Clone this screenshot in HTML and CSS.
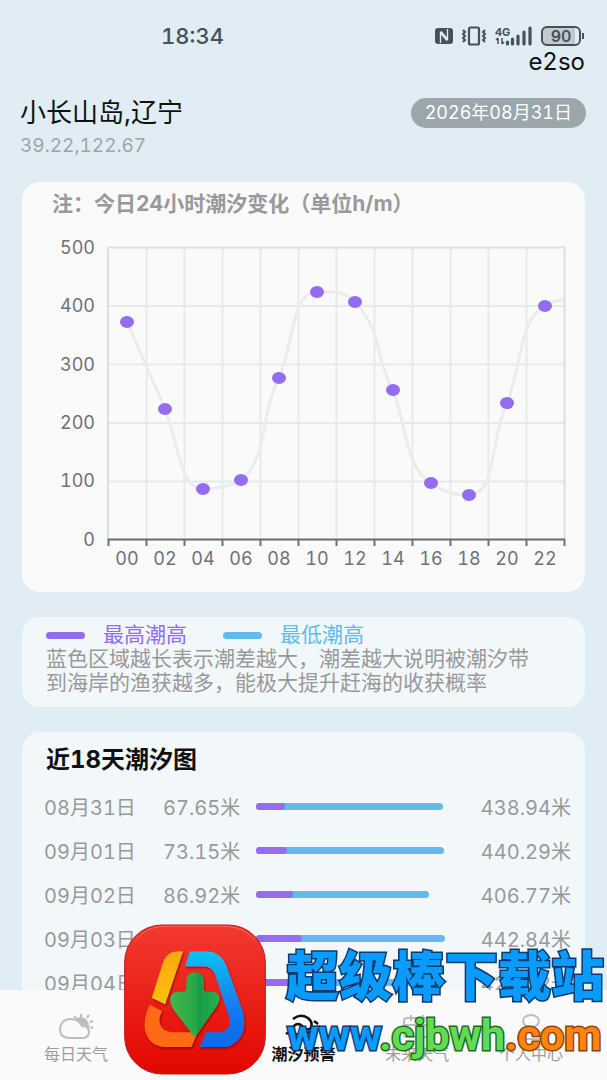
FILE: index.html
```html
<!DOCTYPE html>
<html lang="zh-CN">
<head>
<meta charset="utf-8">
<meta name="viewport" content="width=device-width, initial-scale=1">
<title>潮汐预警</title>
<link rel="stylesheet" href="styles.css">
</head>
<body>
<div class="screen">
  <div class="status">
    <time class="clock">18:34</time>
    <div class="indicators">
      <svg width="18" height="18" viewBox="0 0 18 18" aria-hidden="true"><rect x="0" y="1" width="18" height="16" rx="3" fill="#475159"/><path d="M5.500 16V6L12 13.500M12.500 2V12L6 4.500" fill="none" stroke="#e0edf4" stroke-width="1.300"/></svg>
      <svg width="26" height="20" viewBox="0 0 26 20" fill="none" stroke="#475159" aria-hidden="true"><rect x="8" y="1.500" width="10" height="17" rx="1.500" stroke-width="2.200"/><path d="M2 4l2 2-2 2 2 2-2 2 2 2-2 2M24 4l-2 2 2 2-2 2 2 2-2 2 2 2" stroke-width="2"/></svg>
      <svg width="38" height="20" viewBox="0 0 38 20" aria-hidden="true"><text class="signal-text" x="0" y="10">4G</text><path d="M3 12v6M1 14l2-2M7 12v6M7 18l2-2" stroke="#475159" stroke-width="1.500" fill="none"/><path d="M12.500 16v2M17.500 13v5M23 10v8M29 6v12M35 2v16" stroke="#475159" stroke-width="3.200" stroke-linecap="round"/></svg>
      <span class="battery">90</span>
    </div>
  </div>
  <div class="user">e2so</div>

  <header class="place">
    <div class="place-row">
      <h1 class="place-name">小长山岛,辽宁</h1>
      <button class="date-pill" type="button">2026年08月31日</button>
    </div>
    <p class="coords">39.22,122.67</p>
  </header>

  <main class="content">
    <section class="card chart-card">
      <h2 class="chart-title">注：今日24小时潮汐变化（单位h/m）</h2>
      <svg class="chart" viewBox="0 0 563 374" role="img" aria-label="今日24小时潮汐变化">
        <path class="grid" d="M86 88H542M86 146.500H542M86 205H542M86 263.500H542M124.500 30V321M162.500 30V321M200.500 30V321M238.500 30V321M276.500 30V321M314.500 30V321M352.500 30V321M390.500 30V321M428.500 30V321M466.500 30V321M504.500 30V321"/>
        <rect class="frame" x="86" y="29.500" width="456.500" height="292"/>
        <path class="curve" d="M105 104L143 191C158 230 158 271 181 271Q203 271 219 262C247 240 238 195 257 160C273 120 270 74 295 74C318 73 326 76 333 84C360 112 353 140 371 172C384 205 384 252 409 265Q427 278 447 277C475 276 467 225 485 185C501 145 496 103 523 88Q532 82 542 82"/>
        <path class="axis" d="M85.500 321.500H543M86.500 321V328M124.500 321V328M162.500 321V328M200.500 321V328M238.500 321V328M276.500 321V328M314.500 321V328M352.500 321V328M390.500 321V328M428.500 321V328M466.500 321V328M504.500 321V328M542.500 321V328"/>
        <g class="dots">
          <ellipse cx="105" cy="104" rx="7" ry="6"/><ellipse cx="143" cy="191" rx="7" ry="6"/><ellipse cx="181" cy="271" rx="7" ry="6"/><ellipse cx="219" cy="262" rx="7" ry="6"/><ellipse cx="257" cy="160" rx="7" ry="6"/><ellipse cx="295" cy="74" rx="7" ry="6"/><ellipse cx="333" cy="84" rx="7" ry="6"/><ellipse cx="371" cy="172" rx="7" ry="6"/><ellipse cx="409" cy="265" rx="7" ry="6"/><ellipse cx="447" cy="277" rx="7" ry="6"/><ellipse cx="485" cy="185" rx="7" ry="6"/><ellipse cx="523" cy="88" rx="7" ry="6"/>
        </g>
        <g class="y-labels">
          <text x="73" y="36">500</text><text x="73" y="94">400</text><text x="73" y="153">300</text><text x="73" y="211">200</text><text x="73" y="269">100</text><text x="73" y="328">0</text>
        </g>
        <g class="x-labels">
          <text x="105" y="347">00</text><text x="143" y="347">02</text><text x="181" y="347">04</text><text x="219" y="347">06</text><text x="257" y="347">08</text><text x="295" y="347">10</text><text x="333" y="347">12</text><text x="371" y="347">14</text><text x="409" y="347">16</text><text x="447" y="347">18</text><text x="485" y="347">20</text><text x="523" y="347">22</text>
        </g>
      </svg>
    </section>

    <section class="card note-card">
      <div class="legend">
        <span class="key key-high">最高潮高</span>
        <span class="key key-low">最低潮高</span>
      </div>
      <p class="note">蓝色区域越长表示潮差越大，潮差越大说明被潮汐带到海岸的渔获越多，能极大提升赶海的收获概率</p>
    </section>

    <section class="card days-card">
      <h2 class="days-title">近18天潮汐图</h2>
      <table class="days">
        <tbody>
          <tr><th class="day" scope="row">08月31日</th><td class="low">67.65米</td><td class="range"><div class="bar" style="width:187px"><div class="bar-low" style="width:29px"></div></div></td><td class="high">438.94米</td></tr>
          <tr><th class="day" scope="row">09月01日</th><td class="low">73.15米</td><td class="range"><div class="bar" style="width:188px"><div class="bar-low" style="width:31px"></div></div></td><td class="high">440.29米</td></tr>
          <tr><th class="day" scope="row">09月02日</th><td class="low">86.92米</td><td class="range"><div class="bar" style="width:173px"><div class="bar-low" style="width:37px"></div></div></td><td class="high">406.77米</td></tr>
          <tr><th class="day" scope="row">09月03日</th><td class="low"></td><td class="range"><div class="bar" style="width:189px"><div class="bar-low" style="width:46px"></div></div></td><td class="high">442.84米</td></tr>
          <tr><th class="day" scope="row">09月04日</th><td class="low"></td><td class="range"><div class="bar" style="width:172px"><div class="bar-low" style="width:60px"></div></div></td><td class="high">423.12米</td></tr>
        </tbody>
      </table>
    </section>
  </main>

  <nav class="tabs">
    <a class="tab tab-daily" href="#daily">
      <svg width="36" height="26" viewBox="0 0 36 26" aria-hidden="true"><path d="M17 5q6-4 11 0 5 5 2 12-1-5-6-5-2-5-7-7Z" fill="#bdbdbd"/><path d="M18 4l-2-2M23 3V0M29 4l2-3M32 8l3-1M32 13l3 1" stroke="#bdbdbd" stroke-width="2"/><path d="M13 5q7 0 11 7 7 0 7 6 0 6-7 6H12Q2 24 2 15 3 5 13 5Z" fill="none" stroke="#bdbdbd" stroke-width="2"/></svg>
      <span>每日天气</span>
    </a>
    <a class="tab tab-tide" href="#tide" aria-current="page">
      <svg width="36" height="26" viewBox="0 0 36 26" fill="none" stroke="#111" stroke-width="2.500" aria-hidden="true"><path d="M8 5Q15-1 23 4q6 5 2 11-6 2-8-3-4-4-8 0-2 3-6 3M29 7l4 3M1 20q5-4 10 0t10 0 10 0"/></svg>
      <span>潮汐预警</span>
    </a>
    <a class="tab tab-future" href="#future">
      <svg width="36" height="26" viewBox="0 0 36 26" fill="none" stroke="#bdbdbd" stroke-width="2" aria-hidden="true"><rect x="5" y="4" width="26" height="19" rx="3"/><path d="M12 1v6M24 1v6M5 11h26"/></svg>
      <span>未来天气</span>
    </a>
    <a class="tab tab-me" href="#me">
      <svg width="36" height="26" viewBox="0 0 36 26" fill="none" stroke="#bdbdbd" stroke-width="2" aria-hidden="true"><ellipse cx="18" cy="7" rx="8" ry="6"/><path d="M5 25q1-9 13-9t13 9Z"/></svg>
      <span>个人中心</span>
    </a>
  </nav>

  <aside class="promo">
    <svg class="promo-logo" width="142" height="151" viewBox="40 42 428 453" aria-hidden="true">
      <defs>
        <linearGradient id="red" x1="0" y1="0" x2="0" y2="1"><stop offset="0" stop-color="#f23a30"/><stop offset="1" stop-color="#e20700"/></linearGradient>
        <linearGradient id="blue" x1="0" y1="0" x2="0" y2="1"><stop offset="0" stop-color="#0cc4f2"/><stop offset=".6" stop-color="#1479ee"/><stop offset="1" stop-color="#0b6be8"/></linearGradient>
        <linearGradient id="yellow" x1="0" y1="0" x2="0" y2="1"><stop offset="0" stop-color="#f7a812"/><stop offset="1" stop-color="#ffc107"/></linearGradient>
        <linearGradient id="green" x1="0" y1="0" x2="1" y2="0"><stop offset="0" stop-color="#43b649"/><stop offset=".5" stop-color="#2aa84a"/><stop offset=".6" stop-color="#189c4a"/><stop offset="1" stop-color="#27b04c"/></linearGradient>
        <filter id="lift" x="-20%" y="-20%" width="140%" height="140%"><feDropShadow dx="3" dy="5" stdDeviation="4" flood-color="#700" flood-opacity=".7"/></filter>
      </defs>
      <rect x="42" y="44" width="424" height="449" rx="112" fill="url(#red)" stroke="#c31510" stroke-width="3"/>
      <path d="M76 90Q108 48 160 48H350Q402 50 434 90" fill="none" stroke="#f8665c" stroke-width="3"/>
      <g filter="url(#lift)">
        <path d="M218 123L164 283 124 263 156 162Q168 123 205 123Z" fill="url(#yellow)"/>
        <path d="M239 124H290Q332 126 348 166L399 306Q416 388 350 412H268L288 367H330Q366 360 356 320L315 194Q306 168 280 168H224Z" fill="url(#blue)"/>
        <path d="M118 284L155 304Q145 320 147 338 154 367 188 367H262L243 412H164Q108 408 102 350 101 316 118 284Z" fill="#ff6a14"/>
        <path d="M228 211Q229 187 254 186 280 187 280 211V238Q281 245 290 245H308Q330 249 327 270 325 284 304 310L258 376Q253 382 247 375L190 300Q177 280 180 264 184 246 200 245H219Q228 245 228 236Z" fill="url(#green)"/>
      </g>
    </svg>
    <div class="promo-text">
      <div class="promo-name">超级棒下载站</div>
      <div class="promo-url"><span class="url-a">www</span><span class="url-b">.cjbwh</span><span class="url-c">.com</span></div>
    </div>
  </aside>
</div>
</body>
</html>
```
FILE: styles.css
```css
* { box-sizing: border-box; }

body {
  margin: 0;
  font-family: Inter, "Noto Sans CJK SC", sans-serif;
  font-size: 20px;
  font-variant-numeric: tabular-nums;
  color: #999;
}

h1, h2, p { margin: 0; }

.screen {
  position: relative;
  display: flex;
  flex-direction: column;
  height: 100vh;
  overflow: hidden;
  background: #e0edf4;
}

.status {
  display: flex;
  justify-content: space-between;
  align-items: center;
  flex: none;
  padding: 24px 22px 0 161px;
  line-height: 24px;
  color: #475159;
}

.clock { font-size: 22px; font-weight: 500; }

.indicators { display: flex; align-items: center; gap: 8px; }

.signal-text { font-size: 11px; font-weight: 700; fill: #475159; }

.battery {
  position: relative;
  width: 40px;
  margin-right: 4px;
  border: 2px solid #475159;
  border-radius: 6px;
  background: linear-gradient(90deg, #c0cbd0 88%, #e0edf4 88%);
  font-size: 16px;
  font-weight: 600;
  line-height: 16px;
  text-align: center;
}

.battery::after {
  content: "";
  position: absolute;
  top: 5px;
  right: -5px;
  width: 2px;
  height: 6px;
  background: #475159;
}

.user {
  flex: none;
  padding-right: 22px;
  font-size: 24px;
  line-height: 28px;
  text-align: right;
  color: #111;
}

.place { flex: none; padding: 20px 21px 20px 20px; }

.place-row {
  display: flex;
  justify-content: space-between;
  align-items: center;
  height: 34px;
}

.place-name { font-size: 26px; font-weight: 400; line-height: 34px; color: #111; }

.date-pill {
  height: 30px;
  padding: 0 14px;
  border: 0;
  border-radius: 15px;
  background: #9ba7aa;
  font: inherit;
  font-size: 18px;
  font-variant-numeric: tabular-nums;
  line-height: 30px;
  color: #fff;
}

.coords { font-size: 19px; line-height: 32px; color: #9ca5aa; }

.content {
  display: flex;
  flex: 1;
  flex-direction: column;
  gap: 25px;
  min-height: 0;
  overflow: hidden;
  padding: 0 22px;
}

.card { flex: none; border-radius: 18px; background: #f2f7fa; }

.chart-card { padding-top: 8px; background: #fafafb; }

.chart-title {
  padding-left: 30px;
  font-size: 21px;
  font-weight: 700;
  line-height: 28px;
  white-space: nowrap;
}

.chart { display: block; width: 100%; height: auto; font-size: 18px; }
.grid { fill: none; stroke: #e6eaeb; stroke-width: 2; }
.frame { fill: none; stroke: #dcdfe1; stroke-width: 2; }
.curve { fill: none; stroke: #ececec; stroke-width: 3; }
.axis { fill: none; stroke: #6e7079; stroke-width: 2; }
.dots { fill: #946cf2; }
.y-labels { text-anchor: end; fill: #6e7175; }
.x-labels { text-anchor: middle; fill: #6e7175; }

.note-card { padding: 6px 40px 12px 24px; font-size: 21px; line-height: 24px; }

.legend { display: flex; gap: 36px; }

.key { display: flex; align-items: center; gap: 18px; }

.key::before {
  content: "";
  width: 39px;
  height: 7px;
  border-radius: 4px;
  background: currentColor;
}

.key-high { color: #946cf2; }
.key-low { color: #60bbee; }

.days-card { padding: 12px 14px 0 22px; }

.days-title { padding-left: 2px; margin-bottom: 8px; font-size: 24px; font-weight: 700; line-height: 32px; color: #111; }

.days { width: 100%; border-collapse: collapse; table-layout: fixed; white-space: nowrap; }
.days th, .days td { height: 44px; padding: 0; font-weight: 400; text-align: left; }
.days .day { width: 119px; }
.days .low { width: 93px; }
.days .high { width: 100px; text-align: right; }

.bar { height: 7px; border-radius: 4px; background: #60bbee; }
.bar-low { height: 7px; border-radius: 4px; background: #946cf2; }

.tabs {
  display: grid;
  grid-template-columns: repeat(5, 1fr);
  flex: none;
  height: 90px;
  padding: 24px 19px 0;
  background: #fafafa;
}

.tab {
  display: flex;
  flex-direction: column;
  align-items: center;
  grid-row: 1;
  gap: 4px;
  font-size: 16px;
  line-height: 20px;
  color: #9d9d9d;
  text-decoration: none;
}

.tab-daily { grid-column: 1; }
.tab-tide { grid-column: 3; font-weight: 700; color: #111; }
.tab-future { grid-column: 4; }
.tab-me { grid-column: 5; }

.promo {
  position: absolute;
  right: 4px;
  bottom: 5px;
  display: flex;
  align-items: center;
  gap: 20px;
  white-space: nowrap;
}

.promo-logo { display: block; }

.promo-text {
  width: 317px;
  padding-top: 5px;
  font-weight: 900;
  -webkit-text-stroke: 3px #0c3a6e;
  paint-order: stroke fill;
}

.promo-name {
  font-family: "Noto Sans CJK SC", sans-serif;
  font-size: 53px;
  line-height: 60px;
  color: #0a9bff;
}

.promo-url {
  padding: 5px 0 0 1px;
  font-family: Roboto, sans-serif;
  font-size: 43px;
  font-weight: 700;
  line-height: 54px;
}

.url-a { color: #0a9bff; }
.url-b { color: #62dc57; -webkit-text-stroke-color: #1b6a20; }
.url-c { color: #ff8410; -webkit-text-stroke-color: #93400a; }
```
